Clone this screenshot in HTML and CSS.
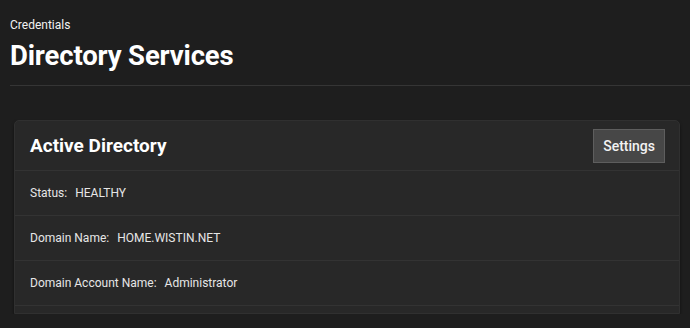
FILE: index.html
```html
<!DOCTYPE html>
<html lang="en">
<head>
    <meta charset="UTF-8">
    <meta name="viewport" content="width=device-width, initial-scale=1.0">
    <title>Directory Services</title>
    <link rel="stylesheet" href="styles.css">
</head>
<body>
    <div id="pageHeader">
        <div class="breadcrumb">Credentials</div>
        <h1 class="pageTitle">Directory Services</h1>
    </div>

    <div id="content">
        <div class="card">
            <div class="cardHeader">
                <h2 class="cardTitle">Active Directory</h2>
                <button class="btn">Settings</button>
            </div>
            <div class="row"><span class="label">Status:</span> HEALTHY</div>
            <div class="row"><span class="label">Domain Name:</span> HOME.WISTIN.NET</div>
            <div class="row"><span class="label">Domain Account Name:</span> Administrator</div>
            <div class="cardFoot"></div>
        </div>
    </div>
</body>
</html>
```

FILE: styles.css
```css
body {
    margin: 0;
    background-color: #1e1e1e;
    color: #e6e6e6;
    font-family: Roboto, "Noto Sans", sans-serif;
    overflow: hidden;
}

#pageHeader {
    margin-left: 10px;
    padding-top: 17px;
    padding-bottom: 12px;
    border-bottom: 1px solid #353535;
}

.breadcrumb {
    font-size: 12px;
    line-height: 16px;
    color: #f2f2f2;
}

.pageTitle {
    margin: 6px 0 0 0;
    font-size: 27.5px;
    line-height: 34px;
    font-weight: 700;
    letter-spacing: -0.15px;
    color: #ffffff;
}

#content {
    padding: 34px 10px 0 14px;
}

.card {
    background-color: #282828;
    border: 1px solid #303030;
    border-radius: 5px 5px 0 0;
    box-shadow: 0 2px 3px rgba(0, 0, 0, 0.5);
}

.cardHeader {
    display: flex;
    justify-content: space-between;
    align-items: center;
    height: 49px;
    padding: 0 14px 0 15px;
    border-bottom: 1px solid #333333;
}

.cardTitle {
    margin: 0;
    font-size: 19px;
    font-weight: 700;
    color: #ffffff;
}

.btn {
    height: 34px;
    padding: 0 9px;
    background-color: #474747;
    border: 1px solid #5e5e5e;
    border-radius: 0;
    color: #f2f2f2;
    font-family: inherit;
    font-size: 14px;
    font-weight: 500;
    margin-top: 1px;
}

.row {
    display: flex;
    align-items: center;
    gap: 8px;
    height: 44px;
    padding-left: 15px;
    border-bottom: 1px solid #333333;
    font-size: 12px;
    color: #e6e6e6;
}

.cardFoot {
    height: 7px;
}
```
